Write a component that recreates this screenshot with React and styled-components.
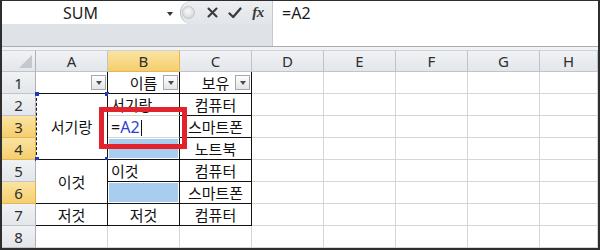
import React from 'react';
import styled, { createGlobalStyle, css } from 'styled-components';

const Global = createGlobalStyle`
  html, body { margin: 0; padding: 0; background: #fff; }
  body {
    width: 600px; height: 250px; overflow: hidden;
    font-family: "Noto Sans", "Noto Sans CJK KR", sans-serif;
  }
  * { box-sizing: border-box; }
`;

const Frame = styled.div`
  width: 600px;
  height: 250px;
  border-style: solid;
  border-color: #2e2e2e;
  border-width: 1px 2px 2px 2px;
  display: flex;
  flex-direction: column;
  overflow: hidden;
  background: #fff;
`;

const FormulaBar = styled.div`
  display: flex;
  height: 45px;
  flex: none;
`;

const LeftPane = styled.div`
  width: 270px;
  display: flex;
  flex-direction: column;
  background: #dfe3e8;
`;

const TopRow = styled.div`
  display: flex;
  height: 23px;
  background: #fff;
`;

const NameBox = styled.div`
  width: 178px;
  display: flex;
  align-items: center;
  padding-right: 7px;
  font-size: 16px;
  color: #1e1e1e;
`;

const NameText = styled.span`
  flex: 1;
  text-align: center;
  padding-right: 8px;
`;

const Caret = styled.span`
  width: 0;
  height: 0;
  border-left: 3.5px solid transparent;
  border-right: 3.5px solid transparent;
  border-top: 4px solid #333;
  margin-top: 2px;
`;

const ButtonGroup = styled.div`
  flex: 1;
  display: flex;
  align-items: center;
  background: linear-gradient(#eceef1, #e2e5e9);
  border-radius: 12px 0 0 12px;
  border-left: 1px solid #b7bbc1;
  padding-left: 1px;
`;

const Grip = styled.span`
  width: 13px;
  height: 13px;
  border-radius: 50%;
  background: radial-gradient(circle at 45% 40%, #fafafa 0%, #e3e5e8 45%, #c9cdd2 100%);
  border: 1px solid #c2c6cb;
  margin-right: 5px;
`;

const IconSlot = styled.span`
  width: ${p => p.$w}px;
  display: flex;
  justify-content: center;
  align-items: center;
  color: #363636;
`;

const Fx = styled.span`
  font-family: "Liberation Serif", serif;
  font-style: italic;
  font-weight: bold;
  font-size: 15px;
  letter-spacing: -0.5px;
  color: #3a3a3a;
  line-height: 1;
`;

const FormulaInput = styled.div`
  flex: 1;
  background: #fff;
  border-left: 1px solid #c5c9cf;
  padding: 2px 9px;
  font-size: 16px;
  line-height: 20px;
  color: #1a1a1a;
`;

const Divider = styled.div`
  height: 4px;
  flex: none;
  border-top: 1px solid #a9adb3;
  background: #f1f2f4;
`;

const Sheet = styled.div`
  position: relative;
  display: grid;
  grid-template-columns: 34px repeat(7, 72px) 1fr;
  grid-template-rows: repeat(9, 22px);
  flex: none;
`;

const headBase = css`
  display: flex;
  align-items: center;
  justify-content: center;
  font-size: 15px;
  color: #2f2f2f;
  border-right: 1px solid #c0c4ca;
  border-bottom: 1px solid #c0c4ca;
  background: ${p => p.$active
    ? 'linear-gradient(#fbe3a2, #f5cf6d)'
    : 'linear-gradient(#f0f2f4, #e3e6ea)'};
  ${p => p.$active && css`
    border-color: #e4b65c;
  `}
`;

const ColHead = styled.div`
  ${headBase}
  border-top: 1px solid #cfd3d8;
`;

const RowHead = styled.div`
  ${headBase}
  border-right-color: ${p => (p.$active ? '#e0ad4f' : '#aeb2b8')};
`;

const Corner = styled.div`
  display: flex;
  align-items: flex-end;
  justify-content: flex-end;
  padding: 0 3px 3px 0;
  background: linear-gradient(#f0f2f4, #e3e6ea);
  border-top: 1px solid #cfd3d8;
  border-right: 1px solid #aeb2b8;
  border-bottom: 1px solid #c0c4ca;
  &::after {
    content: '';
    width: 0;
    height: 0;
    border-left: 13px solid transparent;
    border-bottom: 13px solid #c4c8ce;
  }
`;

const Cell = styled.div`
  position: relative;
  display: grid;
  align-items: center;
  font-size: 15px;
  color: #111;
  background: ${p => (p.$fill ? '#a9cdef' : '#fff')};
  ${p => p.$fill && css`box-shadow: inset 1px 1px 0 #fff, inset -1px -1px 0 #fff;`}
  border-right: 1px solid ${p => (p.$r ? '#111' : '#d6d6d6')};
  border-bottom: 1px solid ${p => (p.$b ? '#111' : '#d6d6d6')};
  grid-row: ${p => (p.$span ? `span ${p.$span}` : 'auto')};
  & > * { grid-area: 1 / 1; }
`;

const Text = styled.span`
  justify-self: ${p => (p.$left ? 'start' : 'center')};
  padding-left: ${p => (p.$left ? '3px' : '0')};
  white-space: nowrap;
  line-height: 20px;
`;

const EditText = styled.span`
  justify-self: start;
  padding-left: 3px;
  white-space: nowrap;
  line-height: 20px;
  font-size: 16px;
`;

const FilterBtn = styled.span`
  justify-self: end;
  align-self: center;
  width: 15px;
  height: 15px;
  margin-right: 1px;
  border: 1px solid #a4a8ae;
  background: linear-gradient(#fdfdfd, #e3e5e8);
  display: flex;
  align-items: center;
  justify-content: center;
  &::after {
    content: '';
    width: 0;
    height: 0;
    border-left: 3.5px solid transparent;
    border-right: 3.5px solid transparent;
    border-top: 4px solid #4d4d4d;
    margin-top: 1px;
  }
`;

const Marquee = styled.span`
  position: absolute;
  top: -1px;
  left: 0;
  right: -1px;
  bottom: -1px;
  border: 1px dashed #141414;
  pointer-events: none;
`;

const Handle = styled.span`
  position: absolute;
  width: 4px;
  height: 4px;
  background: #1f3bb5;
  ${p => (p.$top ? 'top: -2px;' : 'bottom: -2px;')}
  ${p => (p.$leftSide ? 'left: -1px;' : 'right: -2px;')}
`;

const Blue = styled.span`
  color: #2a3fd6;
`;

const Cursor = styled.span`
  display: inline-block;
  width: 1px;
  height: 16px;
  background: #111;
  vertical-align: -3px;
  margin-left: 1px;
`;

const Callout = styled.div`
  position: absolute;
  left: 97px;
  top: 57px;
  width: 88px;
  height: 42px;
  border: 5px solid #e2222c;
  pointer-events: none;
`;

const CancelIcon = () => (
  <svg width="11" height="11" viewBox="0 0 11 11">
    <path d="M1.5 1.5 L9.5 9.5 M9.5 1.5 L1.5 9.5" stroke="#3a3a3a" strokeWidth="2.1" strokeLinecap="round" />
  </svg>
);

const CheckIcon = () => (
  <svg width="14" height="12" viewBox="0 0 14 12">
    <path d="M1.5 6.5 L5.2 10 L12.5 1.5" stroke="#3a3a3a" strokeWidth="2.3" fill="none" strokeLinecap="round" strokeLinejoin="round" />
  </svg>
);

const cols = ['A', 'B', 'C', 'D', 'E', 'F', 'G', 'H'];
const Empty = ({ n }) => Array.from({ length: n }, (_, i) => <Cell key={i} />);

export default function App() {
  return (
    <>
      <Global />
      <Frame>
        <FormulaBar>
          <LeftPane>
            <TopRow>
              <NameBox>
                <NameText>SUM</NameText>
                <Caret />
              </NameBox>
              <ButtonGroup>
                <Grip />
                <IconSlot $w={24}><CancelIcon /></IconSlot>
                <IconSlot $w={22}><CheckIcon /></IconSlot>
                <IconSlot $w={24}><Fx>fx</Fx></IconSlot>
              </ButtonGroup>
            </TopRow>
          </LeftPane>
          <FormulaInput>=A2</FormulaInput>
        </FormulaBar>
        <Divider />
        <Sheet>
          <Corner />
          {cols.map(c => (
            <ColHead key={c} $active={c === 'B'}>{c}</ColHead>
          ))}

          <RowHead>1</RowHead>
          <Cell $r $b><FilterBtn /></Cell>
          <Cell $r $b><Text>이름</Text><FilterBtn /></Cell>
          <Cell $r $b><Text>보유</Text><FilterBtn /></Cell>
          <Empty n={5} />

          <RowHead>2</RowHead>
          <Cell $span={3} $r $b>
            <Text>서기랑</Text>
            <Marquee />
            <Handle $top $leftSide />
            <Handle $top />
            <Handle $leftSide />
            <Handle />
          </Cell>
          <Cell $r><Text $left>서기랑</Text></Cell>
          <Cell $r $b><Text>컴퓨터</Text></Cell>
          <Empty n={5} />

          <RowHead $active>3</RowHead>
          <Cell $r><EditText>=<Blue>A2</Blue><Cursor /></EditText></Cell>
          <Cell $r $b><Text>스마트폰</Text></Cell>
          <Empty n={5} />

          <RowHead $active>4</RowHead>
          <Cell $r $b $fill />
          <Cell $r $b><Text>노트북</Text></Cell>
          <Empty n={5} />

          <RowHead>5</RowHead>
          <Cell $span={2} $r $b><Text>이것</Text></Cell>
          <Cell $r $b><Text $left>이것</Text></Cell>
          <Cell $r $b><Text>컴퓨터</Text></Cell>
          <Empty n={5} />

          <RowHead $active>6</RowHead>
          <Cell $r $b $fill />
          <Cell $r $b><Text>스마트폰</Text></Cell>
          <Empty n={5} />

          <RowHead>7</RowHead>
          <Cell $r $b><Text>저것</Text></Cell>
          <Cell $r $b><Text>저것</Text></Cell>
          <Cell $r $b><Text>컴퓨터</Text></Cell>
          <Empty n={5} />

          <RowHead>8</RowHead>
          <Empty n={8} />

          <Callout />
        </Sheet>
      </Frame>
    </>
  );
}
